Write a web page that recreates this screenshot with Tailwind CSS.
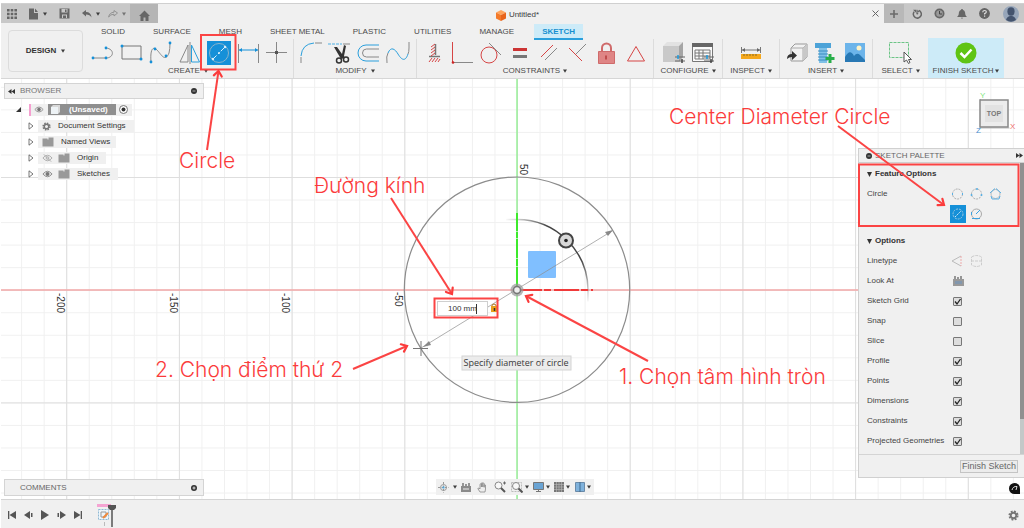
<!DOCTYPE html>
<html lang="vi">
<head>
  <meta charset="UTF-8">
  <meta name="viewport" content="width=device-width, initial-scale=1.0">
  <title>Untitled*</title>
  <script src="https://cdn.jsdelivr.net/npm/@tailwindcss/browser@4"></script>
</head>
<body class="relative flex flex-col h-screen overflow-hidden bg-white pl-px pt-[3px] text-[8px] leading-[10px] text-[#4a4a4a] font-['Liberation_Sans',sans-serif]">

  <!-- shared icons -->
  <svg class="hidden">
    <symbol id="caret" viewBox="0 0 4 4"><path d="M0 .5h4L2 3.8z" fill="#3c3c3c"/></symbol>
    <symbol id="closed" viewBox="0 0 6 8"><path d="M1 .8v6.4L5 4z" fill="#fff" stroke="#555" stroke-width=".8"/></symbol>
    <symbol id="folder" viewBox="0 0 12 10"><path d="M.5 1.500h5v1h1v-2h5v9h-11z" fill="#999"/></symbol>
    <symbol id="eye" viewBox="0 0 12 8"><path d="M1 4q5-6 10 0q-5 6-10 0z" fill="#e4e4e4" stroke="#8a8a8a"/><circle cx="6" cy="4" r="2.100" fill="#777"/></symbol>
    <symbol id="gear" viewBox="0 0 12 12"><circle cx="6" cy="6" r="4.500" fill="none" stroke="#777" stroke-width="2" stroke-dasharray="2 1.534"/><circle cx="6" cy="6" r="3" fill="none" stroke="#777" stroke-width="2"/></symbol>
    <symbol id="sliders" viewBox="0 0 10 8"><path d="M0 2h10M0 6h10" stroke="#666" stroke-width="1"/><path d="M3 0v4" stroke="#1a9be0" stroke-width="1.500"/><path d="M7 4v4" stroke="#444" stroke-width="1.500"/></symbol>
  </svg>

  <header class="shrink-0 bg-[#f0f0f0] border-b border-[#d6d6d6]">
    <!-- document tabs -->
    <div class="flex h-5 border-t border-[#d0d0d0]">
      <div class="flex items-center w-[129px] bg-[#c8c8c8] pl-[6px]">
        <button aria-label="Data panel"><svg class="size-[10px]" viewBox="0 0 10 10" fill="#666"><path d="M0 0h2.600v2.600H0zM3.700 0h2.600v2.600H3.700zM7.400 0H10v2.600H7.400zM0 3.700h2.600v2.600H0zM3.700 3.700h2.600v2.600H3.700zM7.400 3.700H10v2.600H7.400zM0 7.400h2.600V10H0zM3.700 7.400h2.600V10H3.700zM7.400 7.400H10V10H7.400z"/></svg></button>
        <button aria-label="File" class="flex items-center gap-1 ml-[11px]"><svg class="w-[11px] h-3" viewBox="0 0 11 12"><path d="M1 .5h5V5h4v6.500H1z" fill="#666"/><path d="M7 .5 10 4H7z" fill="#666"/></svg><svg class="size-1"><use href="#caret"/></svg></button>
        <button aria-label="Save" class="ml-3"><svg class="size-[11px]" viewBox="0 0 11 11"><path d="M.5.5h10v10H.5z" fill="#666"/><path d="M2.500 1h6v3.500h-6zM3 6.500h5V10H3z" fill="#c8c8c8"/><path d="M6 1.500h1.500V4H6zM4 7.500h3V10H4z" fill="#666"/></svg></button>
        <button aria-label="Undo" class="flex items-center gap-1 ml-3"><svg class="w-[10px] h-2" viewBox="0 0 10 8"><path d="M0 3 4 0v2q5 0 5.500 5.500Q8 4.500 4 4.500v2z" fill="#666"/></svg><svg class="size-1"><use href="#caret"/></svg></button>
        <button aria-label="Redo" class="flex items-center gap-1 ml-2 opacity-60"><svg class="w-[10px] h-2" viewBox="0 0 10 8"><path d="M9.500 3 6 .5v1.700Q1.500 2.500.6 7 2.500 4.200 6 4.200V6z" fill="none" stroke="#666" stroke-width=".9"/></svg><svg class="size-1"><use href="#caret"/></svg></button>
      </div>
      <button aria-label="Home" class="flex items-center justify-center w-7 pt-1 bg-[#b5b5b5]"><svg class="size-[11px]" viewBox="0 0 11 11"><path d="M5.500.5 11 6H9.500v5h-3V7.500h-2V11h-3V6H0z" fill="#666"/></svg></button>
      <div class="relative flex flex-1 items-center justify-center gap-[3px] pt-[3px] pr-1 text-[#3c3c3c]">
        <svg class="w-[10px] h-[11px]" viewBox="0 0 10 11"><path d="M0 2.500 5 0l5 2.500L5 5z" fill="#ffa45c"/><path d="M0 2.500 5 5v6L0 8.500z" fill="#f47a2a"/><path d="M10 2.500 5 5v6l5-2.500z" fill="#e8631a"/></svg>
        <span>Untitled*</span>
        <button aria-label="Close" class="absolute right-[2px] top-[6px]"><svg class="size-[7px]" viewBox="0 0 7 7"><path d="M.5.500l6 6M6.500.5l-6 6" stroke="#666"/></svg></button>
      </div>
      <button aria-label="New tab" class="flex items-center justify-center w-5 bg-[#b8b8b8] ml-[3px]"><svg class="size-2" viewBox="0 0 8 8"><path d="M4 0v8M0 4h8" stroke="#6a6a6a" stroke-width="1.600"/></svg></button>
      <div class="flex items-center gap-3 bg-[#c8c8c8] pl-2 pr-[5px]">
        <button aria-label="Extensions"><svg class="size-[10px]" viewBox="0 0 10 10"><path d="M2.200 2.600a4 4 0 1 0 4.600-1.200" fill="none" stroke="#666" stroke-width="1.500"/><path d="M1 .8h3.600v3.400zM5.500.5l2 2.500-2.500.4z" fill="#666"/><circle cx="5.300" cy="4.500" r="1" fill="#666"/></svg></button>
        <button aria-label="Job status"><svg class="size-[11px]" viewBox="0 0 11 11"><circle cx="5.500" cy="5.500" r="5" fill="#666"/><circle cx="5.500" cy="5.500" r="3.300" fill="#999"/><path d="M5.500 3v3H8" fill="none" stroke="#444"/></svg></button>
        <button aria-label="Notifications"><svg class="size-[10px]" viewBox="0 0 10 10"><path d="M5 0c.8 0 1 .7 1 1 1.700.5 2.200 2 2.200 3.500S9 7 10 8H0c1-1 1.800-2 1.800-3.500S2.300 1.500 4 1c0-.3.200-1 1-1zM3.800 8.700h2.400Q5 10.500 3.800 8.700z" fill="#666"/></svg></button>
        <button aria-label="Help"><svg class="size-[11px]" viewBox="0 0 11 11"><circle cx="5.500" cy="5.500" r="5.400" fill="#636363"/><path d="M3.700 4.200q.2-1.700 1.900-1.700t1.700 1.500Q7.200 5 5.600 5.600v1M5.600 7.500v1.300" fill="none" stroke="#ddd" stroke-width="1.200"/></svg></button>
        <button aria-label="Account" class="ml-px"><svg class="size-4" viewBox="0 0 16 16"><circle cx="8" cy="8" r="8" fill="#97a6ba"/><ellipse cx="8" cy="5.500" rx="3.600" ry="4.200" fill="#44546e"/><path d="M3 14q1-3.500 4-4h2q3 .5 4 4-5 3.500-10 0z" fill="#44546e"/></svg></button>
      </div>
    </div>

    <div class="flex pl-[7px] pr-5">
      <button class="flex items-center justify-center gap-[5px] w-[75px] h-[42px] mt-[7px] rounded-sm border border-[#dcdcdc] font-bold text-[#333]">DESIGN <svg class="size-1"><use href="#caret"/></svg></button>

      <div class="flex-1 ml-2">
        <nav class="flex items-center h-4 pl-[10px] pt-px gap-7">
          <a href="#">SOLID</a>
          <a href="#">SURFACE</a>
          <a href="#">MESH</a>
          <a href="#">SHEET METAL</a>
          <a href="#">PLASTIC</a>
          <a href="#">UTILITIES</a>
          <a href="#">MANAGE</a>
          <a href="#" class="-mx-2 px-2 pt-[3px] pb-px bg-[#cdebf8] border-b-2 border-[#2a9fdc] text-[#1590d0] font-bold">SKETCH</a>
        </nav>

        <div class="grid grid-cols-[202fr_123fr_237fr_69fr_57fr_93fr_56fr_76fr] h-[39px] text-center">
          <!-- create -->
          <section class="flex flex-col justify-between pb-[2px]">
            <div class="flex gap-[5px] pt-[2px]">
              <button aria-label="Line"><svg class="size-6" viewBox="0 0 24 24" fill="none"><path d="M1 17h14M15 7c9 1 8 10 0 10" stroke="#888"/><g fill="#1590d8"><circle cx="2" cy="17" r="1.400"/><circle cx="15" cy="17" r="1.400"/><circle cx="15" cy="7" r="1.400"/></g></svg></button>
              <button aria-label="Rectangle"><svg class="size-6" viewBox="0 0 24 24" fill="none"><path d="M2 5h19v13H2z" stroke="#777"/><circle cx="2" cy="5" r="1.500" fill="#1590d8"/><circle cx="21" cy="18" r="1.500" fill="#1590d8"/></svg></button>
              <button aria-label="Spline"><svg class="size-6" viewBox="0 0 24 24" fill="none"><path d="M2 21C1 8 4 5 8 9s8 13 12 3q1-4 1-10" stroke="#888"/><g fill="#1590d8"><circle cx="2" cy="21" r="1.400"/><circle cx="6" cy="8" r="1.400"/><circle cx="17" cy="15" r="1.400"/><circle cx="21" cy="2" r="1.400"/></g></svg></button>
              <button aria-label="Mirror"><svg class="size-6" viewBox="0 0 24 24" fill="none"><path d="M10 4v17H2zM12 1v22" stroke="#888"/><path d="M13.500 4v17h8z" stroke="#2a9fdc"/></svg></button>
              <button aria-label="Circle" class="bg-[#1590d8]"><svg class="size-6" viewBox="0 0 24 24" fill="none"><circle cx="12" cy="12" r="9.500" stroke="#8ab4cc"/><path d="M6 18 18 6" stroke="#d8f0ff" stroke-dasharray="5 2 2 2"/><g fill="#d8f0ff"><circle cx="6" cy="18" r="1.200"/><circle cx="12" cy="12" r="1"/><circle cx="18" cy="6" r="1.200"/></g></svg></button>
              <button aria-label="Sketch dimension"><svg class="size-6" viewBox="0 0 24 24" fill="none"><path d="M2.500 3v19M22.500 3v19" stroke="#888"/><path d="M3 9h19" stroke="#1590d8"/><path d="M3 9l3-2v4zM22 9l-3-2v4z" fill="#1590d8"/></svg></button>
              <button aria-label="Point"><svg class="size-6" viewBox="0 0 24 24" fill="none"><path d="M11.500 1v21M1 11.500h21" stroke="#888"/><path d="M10 10h3v3h-3z" fill="#555"/></svg></button>
            </div>
            <button class="flex items-center justify-center gap-1 pr-2">CREATE <svg class="size-1"><use href="#caret"/></svg></button>
          </section>

          <!-- modify -->
          <section class="flex flex-col justify-between pb-[2px] border-l border-[#dcdcdc]">
            <div class="flex gap-[5px] pt-[2px] pl-[5px]">
              <button aria-label="Fillet"><svg class="size-6" viewBox="0 0 24 24" fill="none"><path d="M2 22v-6M16 2h7" stroke="#888"/><path d="M2 15Q3 3 15 2" stroke="#2a9fdc"/></svg></button>
              <button aria-label="Trim"><svg class="size-6" viewBox="0 0 24 24" fill="none"><path d="M0 3h14" stroke="#4db0e6" stroke-dasharray="3 1"/><path d="M15 3h7" stroke="#888"/><path d="m6 6 3 0 5 7 2-9 2 1-2 10 1 2-4 1z" fill="#333"/><circle cx="11" cy="19.500" r="2.500" stroke="#333" stroke-width="1.500"/><circle cx="18" cy="18.500" r="2.500" stroke="#333" stroke-width="1.500"/></svg></button>
              <button aria-label="Offset"><svg class="size-6" viewBox="0 0 24 24" fill="none"><path d="M22 4H9a8 8 0 0 0 0 16h13" stroke="#2a9fdc"/><path d="M22 8H9.500a4 4 0 0 0 0 8H22" stroke="#888"/></svg></button>
              <button aria-label="Blend curve"><svg class="size-6" viewBox="0 0 24 24" fill="none"><path d="M1 22Q0 15 2 12M23 1v6q0 4-1 6" stroke="#888"/><path d="M2 12c3-7 7-4 10 1s7 9 10 0" stroke="#2a9fdc"/></svg></button>
            </div>
            <button class="flex items-center justify-center gap-1">MODIFY <svg class="size-1"><use href="#caret"/></svg></button>
          </section>

          <!-- constraints -->
          <section class="flex flex-col justify-between pb-[2px] border-l border-[#dcdcdc]">
            <div class="flex gap-[5px] pt-[2px] pl-[5px]">
              <button aria-label="Horizontal/Vertical"><svg class="size-6" viewBox="0 0 24 24" fill="none"><path d="M13.500 3v11M7 15.500h11" stroke="#777" stroke-width="1.500"/><path d="m9 6 4-3m-4 6 4-3m-4 6 4-3m-4 6 4-3M7 21l3-4m0 4 3-4m0 4 3-4m0 4 2-3" stroke="#d64545"/></svg></button>
              <button aria-label="Perpendicular"><svg class="size-6" viewBox="0 0 24 24" fill="none"><path d="M1.500 1v20" stroke="#d64545"/><path d="M2 21.500h20" stroke="#888"/><circle cx="2" cy="21.500" r="1.300" fill="#c22"/></svg></button>
              <button aria-label="Tangent"><svg class="size-6" viewBox="0 0 24 24" fill="none"><circle cx="9" cy="14" r="8" stroke="#d64545"/><path d="m9 2 12 12" stroke="#888"/></svg></button>
              <button aria-label="Equal"><svg class="size-6" viewBox="0 0 24 24" fill="none"><path d="M4 8.500h14" stroke="#cc3434" stroke-width="3"/><path d="M4 15.500h14" stroke="#777" stroke-width="3"/></svg></button>
              <button aria-label="Parallel"><svg class="size-6" viewBox="0 0 24 24" fill="none"><path d="M3 16 15 4" stroke="#d64545"/><path d="M7 19 19 7" stroke="#888"/></svg></button>
              <button aria-label="Collinear"><svg class="size-6" viewBox="0 0 24 24" fill="none"><path d="m2 7 13 13" stroke="#d64545"/><path d="M9 13 19 3" stroke="#888"/></svg></button>
              <button aria-label="Fix"><svg class="size-6" viewBox="0 0 24 24" fill="none"><path d="M6 11V7a4.500 4.500 0 0 1 9 0v4" stroke="#cf6a6a" stroke-width="2"/><path d="M2.500 10.500h16v12h-16z" fill="#df8585" stroke="#cf6a6a"/><path d="M10 14.500v4" stroke="#b43a3a" stroke-width="1.500"/></svg></button>
              <button aria-label="Polygon"><svg class="size-6" viewBox="0 0 24 24" fill="none"><path d="M11 5.500 19.500 20h-17z" stroke="#d64545"/></svg></button>
            </div>
            <button class="flex items-center justify-center gap-[3px]">CONSTRAINTS <svg class="size-1"><use href="#caret"/></svg></button>
          </section>

          <!-- configure -->
          <section class="flex flex-col justify-between pb-[2px] border-l border-[#dcdcdc]">
            <div class="flex justify-center gap-[5px] pt-[2px]">
              <button aria-label="Configure design"><svg class="size-6" viewBox="0 0 24 24"><path d="m1 5 4-4h16l-4 4z" fill="#e2e2e2"/><path d="M1 5h16v16H1z" fill="#c9c9c9"/><path d="m17 5 4-4v15l-4 5z" fill="#a5a5a5"/><use href="#sliders" x="13" y="14" width="10" height="8"/></svg></button>
              <button aria-label="Configuration table"><svg class="size-6" viewBox="0 0 24 24" fill="none"><path d="M1.500 2.500h20v18h-20z" fill="#fafafa" stroke="#777"/><path d="M1 2h21v4H1z" fill="#666"/><path d="M4 9h15v9H4zM4 12h15M4 15h15M8 9v9M12 9v9" stroke="#777"/><use href="#sliders" x="13" y="14" width="10" height="8"/></svg></button>
            </div>
            <button class="flex items-center justify-center gap-[3px]">CONFIGURE <svg class="size-1"><use href="#caret"/></svg></button>
          </section>

          <!-- inspect -->
          <section class="flex flex-col justify-between pb-[2px] border-l border-[#dcdcdc]">
            <div class="flex justify-center pt-[2px]">
              <button aria-label="Measure"><svg class="size-6" viewBox="0 0 24 24" fill="none"><path d="M2.500 6v6M21.500 6v6M3 9h18" stroke="#777"/><path d="m3 9 3-2v4zM21 9l-3-2v4z" fill="#666"/><path d="M2 13h20v5H2z" fill="#f5a81c"/><path d="M5 13v2m3-2v2m3-2v2m3-2v2m3-2v2" stroke="#8a6a20"/></svg></button>
            </div>
            <button class="flex items-center justify-center gap-[3px]">INSPECT <svg class="size-1"><use href="#caret"/></svg></button>
          </section>

          <!-- insert -->
          <section class="flex flex-col justify-between pb-[2px] border-l border-[#dcdcdc]">
            <div class="flex justify-center gap-[5px] pt-[2px]">
              <button aria-label="Insert derive"><svg class="size-6" viewBox="0 0 24 24"><path d="m6 7 4-4h12v13l-4 4H6z" fill="#f2f2f2" stroke="#999"/><path d="M18 7h-12M18 7v13M18 7l4-4" stroke="#aaa"/><path d="m18 7 4-4v13l-4 4z" fill="#c8c8c8"/><path d="M2 18q0-5 5-5v-3l5 4.500L7 19v-3q-3 0-5 2z" fill="#333"/></svg></button>
              <button aria-label="Insert fastener"><svg class="size-6" viewBox="0 0 24 24"><path d="M1 2h16v5H1z" fill="#4da3d8"/><path d="M5 7h8v15H5z" fill="#7fc1e8"/><path d="M4 10h10M4 13h10M4 16h10M4 19h10" stroke="#3b8cc0"/><path d="M16 13v9M11.500 17.500h9" stroke="#27ae4a" stroke-width="3"/></svg></button>
              <button aria-label="Insert image"><svg class="size-6" viewBox="0 0 24 24"><path d="M2 2h20v19H2z" fill="#6cb4ea"/><circle cx="16" cy="7" r="2.500" fill="#fdf3c8"/><path d="M2 16q5-9 9-1 3-4 6-1l5 5v2H2z" fill="#2878b4"/></svg></button>
            </div>
            <button class="flex items-center justify-center gap-[3px]">INSERT <svg class="size-1"><use href="#caret"/></svg></button>
          </section>

          <!-- select -->
          <section class="flex flex-col justify-between pb-[2px] border-l border-[#dcdcdc]">
            <div class="flex justify-center pt-[2px]">
              <button aria-label="Select"><svg class="size-6" viewBox="0 0 24 24" fill="none"><path d="M.5 1.500h19v15H.5z" stroke="#6cc486" stroke-dasharray="3 1"/><path d="M15 11v10l2.500-2 2 3.500 1.500-1-1.500-3h3z" fill="#fff" stroke="#555"/></svg></button>
            </div>
            <button class="flex items-center justify-center gap-[3px]">SELECT <svg class="size-1"><use href="#caret"/></svg></button>
          </section>

          <!-- finish -->
          <button class="flex flex-col items-center justify-between -mt-px pb-[2px] bg-[#cdebf8]">
            <svg class="size-6 mt-[3px]" viewBox="0 0 24 24"><circle cx="12" cy="12" r="10.500" fill="#5fc414"/><path d="m6.500 12 4 4 7-7.500" fill="none" stroke="#fff" stroke-width="2.500"/></svg>
            <span class="flex items-center gap-[2px]">FINISH SKETCH <svg class="size-1"><use href="#caret"/></svg></span>
          </button>
        </div>
      </div>
    </div>
  </header>

  <main class="relative flex-1 min-h-0 overflow-hidden bg-white">
    <!-- sketch plane: 10 mm = 22.54 units, origin at 517,290 -->
    <svg class="absolute inset-0 size-full" viewBox="1 79 1023 420" preserveAspectRatio="xMidYMid slice" fill="none">
      <defs>
        <pattern id="minor" x="517" y="289.700" width="22.540" height="22.540" patternUnits="userSpaceOnUse"><path d="M0 .5h22.540M.5 0v22.540" stroke="#f0f0f0"/></pattern>
        <pattern id="major" x="517" y="289.700" width="112.700" height="112.700" patternUnits="userSpaceOnUse"><path d="M0 .5h112.700M.5 0v112.700" stroke="#dedede"/></pattern>
        <linearGradient id="fade" gradientUnits="userSpaceOnUse" x1="505" y1="219" x2="590" y2="302"><stop offset="0" stop-color="#444" stop-opacity="0"/><stop offset=".3" stop-color="#444"/><stop offset=".7" stop-color="#444"/><stop offset="1" stop-color="#444" stop-opacity="0"/></linearGradient>
      </defs>
      <rect x="0" y="0" width="1024" height="528" fill="url(#minor)"/>
      <rect x="0" y="0" width="1024" height="528" fill="url(#major)"/>
      <path d="M0 290h1024" stroke="#f4aaaa" stroke-width="1.500"/>
      <path d="M517 0v528" stroke="#98ef98" stroke-width="1.500"/>
      <g class="text-[10px]" fill="#333">
        <text transform="translate(57 293) rotate(90)">-200</text>
        <text transform="translate(170 293) rotate(90)">-150</text>
        <text transform="translate(282 293) rotate(90)">-100</text>
        <text transform="translate(395 292) rotate(90)">-50</text>
        <text transform="translate(520 164) rotate(90)">50</text>
      </g>

      <circle cx="517" cy="289.700" r="112.700" stroke="#8c8c8c" stroke-width="1.200"/>
      <rect x="528" y="251" width="28" height="27" rx="1" fill="#80bfff"/>
      <path d="M421 348 612 231" stroke="#8f8f8f" stroke-opacity=".7"/>
      <path d="m423 347 6-6 2 4zM613 230l-8 2 3 4z" fill="#888"/>
      <path d="M506 219.500h11a71 71 0 0 1 71 70v12" stroke="url(#fade)" stroke-width="1.500"/>
      <circle cx="566" cy="240.500" r="7" fill="#d8d8d8" stroke="#444" stroke-width="2"/>
      <circle cx="566" cy="240.500" r="1.800" fill="#222"/>
      <path d="M517 213v77" stroke="#3dea2c" stroke-width="2" stroke-dasharray="18 1 6 1 19 1 7 1 40"/>
      <path d="M517 290h76" stroke="#f03a3a" stroke-width="2" stroke-dasharray="25 2 7 3"/>
      <circle cx="517" cy="290" r="6.500" fill="#999" fill-opacity=".7"/>
      <circle cx="517" cy="290" r="3.500" fill="#eee" stroke="#777" stroke-width="1.500"/>
      <path d="M421 341v15M413 348.500h15" stroke="#777"/>

      <!-- dimension box and prompt -->
      <foreignObject x="437" y="301" width="51" height="16">
        <input type="text" value="100 mm" aria-label="Diameter" class="block w-full h-[15px] pl-[10px] pr-1 bg-white border border-[#cfcfcf] text-[8px] leading-[10px] text-[#333] outline-none">
      </foreignObject>
      <path d="M476.500 304v10" stroke="#333"/>
      <path d="M492 307v-2q2-2 4 0v2" stroke="#b07a1e"/>
      <path d="M491 306h7v6h-7z" fill="#e8a01c"/>
      <path d="M494.500 308v3" stroke="#333" stroke-width="1.500"/>
      <rect x="462" y="356" width="109" height="14" fill="#ececec" stroke="#d4d4d4"/>
      <text x="516" y="366" text-anchor="middle" fill="#3a3a3a" class="text-[9px] font-['Open_Sans',sans-serif]">Specify diameter of circle</text>
    </svg>

    <!-- browser tree -->
    <aside class="absolute left-[3px] top-1 w-[200px]">
      <div class="flex items-center h-4 px-[3px] bg-[#f0f0f0] border border-[#d4d4d4] text-[#777]">
        <svg class="w-[7px] h-[5px]" viewBox="0 0 7 5"><path d="M3.500 0v5L0 2.500zM7 0v5L3.500 2.500z" fill="#333"/></svg>
        <span class="ml-[5px] flex-1">BROWSER</span>
        <svg class="size-[6px] mr-[3px]" viewBox="0 0 6 6"><circle cx="3" cy="3" r="3" fill="#333"/><path d="M1.500 3h3" stroke="#aaa"/></svg>
      </div>
      <ul class="mt-[2px] text-[#333]">
        <li class="flex items-center h-[17px] pl-3">
          <svg class="size-[5px]" viewBox="0 0 5 5"><path d="M5 0v5H0z" fill="#333"/></svg>
          <div class="flex items-center h-3 ml-2 bg-[#f0f0f0] border-l-2 border-[#f5a0d0] pl-[3px] pr-1">
            <svg class="w-[10px] h-[7px]"><use href="#eye"/></svg>
            <div class="flex items-center h-[11px] ml-1 pl-[3px] pr-2 bg-[#8f8f8f] text-white font-bold">
              <svg class="size-[9px] mr-[9px]" viewBox="0 0 9 9"><path d="m0 2 2-2h7v7L7 9H0z" fill="#d8d8d8"/><path d="M0 2h7v7H0z" fill="#eef3f6"/></svg>
              (Unsaved)
            </div>
            <svg class="size-[9px] ml-[3px]" viewBox="0 0 9 9"><circle cx="4.500" cy="4.500" r="4" fill="#fff" stroke="#777"/><circle cx="4.500" cy="4.500" r="2" fill="#333"/></svg>
          </div>
        </li>
        <li class="flex items-center h-4 pl-6"><svg class="w-[6px] h-2"><use href="#closed"/></svg><div class="flex items-center h-3 ml-1 pl-1 pr-2 bg-[#f0f0f0]"><svg class="size-[9px] mr-[7px]"><use href="#gear"/></svg>Document Settings</div></li>
        <li class="flex items-center h-4 pl-6"><svg class="w-[6px] h-2"><use href="#closed"/></svg><div class="flex items-center h-3 ml-1 pl-1 pr-[6px] bg-[#f0f0f0]"><svg class="w-3 h-[10px] mr-[7px]"><use href="#folder"/></svg>Named Views</div></li>
        <li class="flex items-center h-4 pl-6"><svg class="w-[6px] h-2"><use href="#closed"/></svg><div class="flex items-center h-3 ml-1 pl-1 pr-2 bg-[#f0f0f0]"><svg class="w-[11px] h-2 mr-[5px]" viewBox="0 0 12 8"><path d="M1 4q5-6 10 0q-5 6-10 0zM2 0l8 8" fill="none" stroke="#aaa"/><circle cx="6" cy="4" r="1.500" fill="none" stroke="#aaa"/></svg><svg class="w-3 h-[10px] mr-[7px]"><use href="#folder"/></svg>Origin</div></li>
        <li class="flex items-center h-4 pl-6"><svg class="w-[6px] h-2"><use href="#closed"/></svg><div class="flex items-center h-3 ml-1 pl-1 pr-2 bg-[#f0f0f0]"><svg class="w-[11px] h-2 mr-[5px]"><use href="#eye"/></svg><svg class="w-3 h-[10px] mr-[7px]"><use href="#folder"/></svg>Sketches</div></li>
      </ul>
    </aside>

    <!-- view cube -->
    <svg class="absolute right-1 top-3 w-11 h-[46px] text-[8px]" viewBox="0 0 44 46">
      <path d="M4.500 8v29h29" fill="none" stroke="#bbb"/>
      <rect x="4" y="9" width="28" height="27" fill="#ececec" stroke="#888" stroke-width="1.500"/>
      <rect x="9" y="14" width="18" height="17" fill="#e2e2e2"/>
      <text x="18" y="25" text-anchor="middle" fill="#777" class="text-[7px] font-bold">TOP</text>
      <text x="4" y="7" fill="#7fe87f">Y</text>
      <text x="0" y="42" fill="#4a90d0">Z</text>
      <text x="34" y="38" fill="#f07070">X</text>
    </svg>

    <!-- sketch palette -->
    <aside class="absolute right-0 top-[69px] w-[166px] bg-[#f0f0f0] border border-r-0 border-[#d0d0d0] text-[#444]">
      <div class="flex items-center h-[14px] pl-[7px] pr-px border-b border-[#d0d0d0] text-[#666]">
        <svg class="size-[6px]" viewBox="0 0 6 6"><circle cx="3" cy="3" r="3" fill="#333"/><path d="M1.500 3h3" stroke="#aaa"/></svg>
        <span class="ml-[3px] flex-1">SKETCH PALETTE</span>
        <svg class="w-[7px] h-[5px]" viewBox="0 0 7 5"><path d="M0 0v5l3.500-2.500zM3.500 0v5L7 2.500z" fill="#333"/></svg>
      </div>
      <div class="flex">
        <div class="flex-1 pl-2 pt-px pb-[3px]">
          <h2 class="flex items-center gap-[3px] h-5 font-bold text-[#333]"><svg class="size-[5px]" viewBox="0 0 5 5"><path d="M0 0h5L2.500 5z" fill="#333"/></svg>Feature Options</h2>
          <div class="grid grid-cols-[83px_1fr]">
            <span class="h-5 leading-[20px]">Circle</span>
            <div class="grid grid-cols-[16px_16px_16px] gap-x-[3px] auto-rows-[20px] items-center">
              <button aria-label="Circle type 2-point"><svg class="size-4" viewBox="0 0 16 16" fill="none"><circle cx="7.500" cy="8" r="5" stroke="#aaa" stroke-dasharray="2 1"/><path d="M2.500 7v2M12.500 7v2" stroke="#5ab0e4"/></svg></button>
              <button aria-label="Circle type 3-point"><svg class="size-4" viewBox="0 0 16 16" fill="none"><circle cx="7.500" cy="8" r="5" stroke="#aaa" stroke-dasharray="2 1"/><path d="M7 3h2M2.500 8v2M12.500 8v2" stroke="#5ab0e4" stroke-width="1.500"/></svg></button>
              <button aria-label="Circle type 3-tangent"><svg class="size-4" viewBox="0 0 16 16" fill="none"><circle cx="7.500" cy="8" r="4.500" stroke="#bbb"/><path d="m2 7 5-4.500M8 2.500l5 4.500M4 13h7M3 10l1 3M12 10l-1 3" stroke="#5ab0e4"/></svg></button>
              <button aria-label="Circle type center diameter" class="h-[18px] bg-[#1590d8]"><svg class="size-4" viewBox="0 0 16 16" fill="none"><circle cx="8" cy="8" r="5" stroke="#9cc8e0" stroke-dasharray="2 1"/><path d="m5 11 6-6" stroke="#cde8f8" stroke-dasharray="2 1"/></svg></button>
              <button aria-label="Circle type 2-tangent"><svg class="size-4" viewBox="0 0 16 16" fill="none"><circle cx="7.500" cy="8" r="5" stroke="#aaa"/><path d="m7 8 4-4M3 12.500h8M2.500 6v3" stroke="#3ba2e0"/></svg></button>
            </div>
          </div>

          <h2 class="flex items-center gap-[3px] h-5 mt-[7px] font-bold text-[#333]"><svg class="size-[5px]" viewBox="0 0 5 5"><path d="M0 0h5L2.500 5z" fill="#333"/></svg>Options</h2>
          <div class="flex items-center h-5"><span class="w-[83px]">Linetype</span>
            <button aria-label="Construction"><svg class="size-4" viewBox="0 0 16 16" fill="none"><path d="M11 3 2 8l9 5" stroke="#bbb"/><path d="M11 3v10" stroke="#eaa" stroke-dasharray="2 1"/></svg></button>
            <button aria-label="Centerline" class="ml-[3px]"><svg class="size-4" viewBox="0 0 16 16" fill="none"><path d="M2.500 4q5-3 10 0v8q-5 3-10 0zM2 8h11" stroke="#ccc" stroke-dasharray="3 1"/></svg></button>
          </div>
          <div class="flex items-center h-5"><span class="w-[86px]">Look At</span><button aria-label="Look At"><svg class="w-[11px] h-[10px]" viewBox="0 0 11 10"><path d="M0 3h11v7H0z" fill="#999"/><path d="M2 0v3m3-2v2m3-3v3" stroke="#777" stroke-width="1.500"/><path d="M2 5h7v3H2z" fill="#8297ad"/></svg></button></div>
          <label class="flex items-center h-5"><span class="w-[86px]">Sketch Grid</span><input type="checkbox" checked class="peer appearance-none size-[9px] rounded-[1px] border border-[#777] bg-[#ddd]"><svg class="hidden peer-checked:block size-[9px] -ml-[9px]" viewBox="0 0 9 9"><path d="m2 4.500 2 2.500 3.500-5" fill="none" stroke="#222" stroke-width="1.300"/></svg></label>
          <label class="flex items-center h-5"><span class="w-[86px]">Snap</span><input type="checkbox" class="appearance-none size-[9px] rounded-[1px] border border-[#777] bg-[#ddd]"></label>
          <label class="flex items-center h-5"><span class="w-[86px]">Slice</span><input type="checkbox" class="appearance-none size-[9px] rounded-[1px] border border-[#777] bg-[#ddd]"></label>
          <label class="flex items-center h-5"><span class="w-[86px]">Profile</span><input type="checkbox" checked class="peer appearance-none size-[9px] rounded-[1px] border border-[#777] bg-[#ddd]"><svg class="hidden peer-checked:block size-[9px] -ml-[9px]" viewBox="0 0 9 9"><path d="m2 4.500 2 2.500 3.500-5" fill="none" stroke="#222" stroke-width="1.300"/></svg></label>
          <label class="flex items-center h-5"><span class="w-[86px]">Points</span><input type="checkbox" checked class="peer appearance-none size-[9px] rounded-[1px] border border-[#777] bg-[#ddd]"><svg class="hidden peer-checked:block size-[9px] -ml-[9px]" viewBox="0 0 9 9"><path d="m2 4.500 2 2.500 3.500-5" fill="none" stroke="#222" stroke-width="1.300"/></svg></label>
          <label class="flex items-center h-5"><span class="w-[86px]">Dimensions</span><input type="checkbox" checked class="peer appearance-none size-[9px] rounded-[1px] border border-[#777] bg-[#ddd]"><svg class="hidden peer-checked:block size-[9px] -ml-[9px]" viewBox="0 0 9 9"><path d="m2 4.500 2 2.500 3.500-5" fill="none" stroke="#222" stroke-width="1.300"/></svg></label>
          <label class="flex items-center h-5"><span class="w-[86px]">Constraints</span><input type="checkbox" checked class="peer appearance-none size-[9px] rounded-[1px] border border-[#777] bg-[#ddd]"><svg class="hidden peer-checked:block size-[9px] -ml-[9px]" viewBox="0 0 9 9"><path d="m2 4.500 2 2.500 3.500-5" fill="none" stroke="#222" stroke-width="1.300"/></svg></label>
          <label class="flex items-center h-5"><span class="w-[86px]">Projected Geometries</span><input type="checkbox" checked class="peer appearance-none size-[9px] rounded-[1px] border border-[#777] bg-[#ddd]"><svg class="hidden peer-checked:block size-[9px] -ml-[9px]" viewBox="0 0 9 9"><path d="m2 4.500 2 2.500 3.500-5" fill="none" stroke="#222" stroke-width="1.300"/></svg></label>
        </div>
        <div class="w-1 bg-[#c4c8c8]"><div class="h-[88%] bg-[#909090]"></div></div>
      </div>
      <div class="flex justify-end items-center h-[23px] pr-[6px] border-t border-[#d4d4d4]">
        <button class="h-[13px] px-px border border-[#c4c4c4] bg-[#ececec] text-[9px] leading-[11px] text-[#666]">Finish Sketch</button>
      </div>
    </aside>

    <!-- comments -->
    <div class="absolute left-[3px] bottom-[3px] flex items-center w-[200px] h-[17px] pl-[15px] pr-[6px] bg-[#f0f0f0] border border-[#d4d4d4] text-[#666]">
      <span class="flex-1">COMMENTS</span>
      <svg class="size-[6px]" viewBox="0 0 6 6"><circle cx="3" cy="3" r="3" fill="#333"/><path d="M1.500 3h3M3 1.500v3" stroke="#ddd"/></svg>
    </div>

    <!-- navigation bar -->
    <div class="absolute left-1/2 bottom-1 -translate-x-1/2 ml-[2px] flex items-center h-4 w-[158px] pl-[2px] bg-[#f0f0f0]">
      <button aria-label="Orbit" class="flex items-center gap-1"><svg class="size-[11px]" viewBox="0 0 11 11" fill="none"><circle cx="5.500" cy="5.500" r="3" stroke="#999"/><path d="M5.500 0v11M0 5.500h11" stroke="#999" stroke-dasharray="2 1.500"/><path d="M4.500 4.500h2v2h-2z" fill="#4aa6dc"/></svg><svg class="size-1"><use href="#caret"/></svg></button>
      <button aria-label="Look at" class="ml-1"><svg class="w-[10px] h-[10px]" viewBox="0 0 10 10"><path d="M0 4h10v6H0z" fill="#8a8a8a"/><path d="M2 1v3M5 2v2M8 1v3" stroke="#777" stroke-width="1.500"/><path d="M2 6h6v2H2z" fill="#bbb"/></svg></button>
      <button aria-label="Pan" class="ml-[6px]"><svg class="size-[11px]" viewBox="0 0 11 11"><path d="M3 10 .8 6.500 2 6l1 1V2.200q.8-.8 1.400 0V5 1q.8-.8 1.400 0v4-3.600q.8-.7 1.400 0V5.300 3q.8-.6 1.300 0V7L8 10z" fill="#eee" stroke="#888" stroke-width=".8"/></svg></button>
      <button aria-label="Zoom" class="ml-[6px]"><svg class="size-3" viewBox="0 0 12 12" fill="none"><circle cx="4.500" cy="4.500" r="3.500" fill="#f8f8f8" stroke="#888"/><path d="m7 7 4 4" stroke="#555" stroke-width="2"/><path d="M9 2h3M10.500.5v3" stroke="#666"/></svg></button>
      <button aria-label="Fit" class="flex items-center gap-[2px] ml-[5px]"><svg class="size-3" viewBox="0 0 12 12" fill="none"><path d="M.5 1.500h10v9H.5z" stroke="#bbb" stroke-dasharray="2 1"/><circle cx="5" cy="5" r="3.500" fill="#f8f8f8" stroke="#888"/><path d="m7.500 7.500 4 4" stroke="#555" stroke-width="2"/></svg><svg class="size-1"><use href="#caret"/></svg></button>
      <button aria-label="Display" class="flex items-center gap-[2px] ml-1"><svg class="w-[11px] h-[10px]" viewBox="0 0 11 10"><path d="M.5.500h10v7H.5z" fill="#6aa4d4" stroke="#777"/><path d="M3 9.500h5M5.500 8v2" stroke="#777"/></svg><svg class="size-1"><use href="#caret"/></svg></button>
      <button aria-label="Grid" class="flex items-center gap-[2px] ml-1"><svg class="size-[10px]" viewBox="0 0 10 10"><path d="M0 0h10v10H0z" fill="#777"/><path d="M0 2.500h10M0 5h10M0 7.500h10M2.500 0v10M5 0v10M7.500 0v10" stroke="#bbb" stroke-width=".6"/></svg><svg class="size-1"><use href="#caret"/></svg></button>
      <button aria-label="Viewports" class="flex items-center gap-[2px] ml-[5px]"><svg class="size-[10px]" viewBox="0 0 10 10"><path d="M.5.500h9v9h-9z" fill="#7fb2dc" stroke="#6a8aa8"/><path d="M5 0v10" stroke="#3f6a90"/></svg><svg class="size-1"><use href="#caret"/></svg></button>
    </div>

    <button aria-label="Assistant" class="absolute right-1 bottom-[5px]"><svg class="size-[11px]" viewBox="0 0 11 11"><path d="M5.500 0A5.500 5.500 0 0 1 11 5.500V11H5.500a5.500 5.500 0 0 1 0-11z" fill="#111"/><path d="M3 7q1-4 5-3.500L7 7" fill="none" stroke="#ddd"/></svg></button>
  </main>

  <!-- timeline -->
  <footer class="flex shrink-0 items-center h-[29px] pt-[2px] pl-[7px] pr-[5px] bg-[#f0f0f0] border-t border-[#d4d4d4]">
    <div class="flex items-center gap-2">
      <button aria-label="Go to start"><svg class="size-2" viewBox="0 0 8 8" fill="#555"><path d="M0 0h1.300v8H0zM8 0v8L1.500 4z"/></svg></button>
      <button aria-label="Step back"><svg class="w-[9px] h-2" viewBox="0 0 9 8" fill="#555"><path d="M6 0v8L0 4zM7 2h1.500v4H7z"/></svg></button>
      <button aria-label="Play"><svg class="w-2 h-[10px]" viewBox="0 0 8 10" fill="#555"><path d="M0 0v10l8-5z"/></svg></button>
      <button aria-label="Step forward"><svg class="w-[9px] h-2" viewBox="0 0 9 8" fill="#555"><path d="M3 0v8l6-4zM.5 2H2v4H.5z"/></svg></button>
      <button aria-label="Go to end"><svg class="size-2" viewBox="0 0 8 8" fill="#555"><path d="M6.700 0H8v8H6.700zM0 0v8l6.500-4z"/></svg></button>
    </div>
    <button aria-label="Sketch1" class="ml-[15px] mr-auto"><svg class="w-5 h-6" viewBox="0 0 20 24" fill="none"><path d="M0 1h14v3H0z" fill="#f5a3d2"/><path d="M1.500 6.500h10v10h-10z" fill="#eef6fb" stroke="#8fb8d4" stroke-dasharray="2 1"/><path d="M4 9h5v5H4z" stroke="#999"/><path d="m6 15 5-5" stroke="#f08a3c" stroke-width="2"/><path d="M7.500 19v4" stroke="#bbb"/><path d="M11 2h8v3l-2 2h-4l-2-2z" fill="#555"/><path d="M15 6v18" stroke="#555" stroke-width="1.500"/></svg></button>
    <button aria-label="Settings"><svg class="size-[11px]" viewBox="0 0 12 12"><use href="#gear" width="12" height="12"/></svg></button>
  </footer>

  <!-- tutorial notes over the whole window -->
  <svg class="absolute inset-0 size-full pointer-events-none" viewBox="0 0 1024 528" preserveAspectRatio="xMidYMid slice" fill="none">
    <defs>
      <marker id="head" viewBox="-8 -6 10 12" markerWidth="10" markerHeight="12" markerUnits="userSpaceOnUse" orient="auto"><path d="M-5-4 0 0l-5 4" fill="none" stroke="#fb3b3b" stroke-width="2.200" stroke-linecap="round"/></marker>
    </defs>
    <g stroke="#fb4444" stroke-width="2">
      <rect x="201" y="35" width="34.500" height="34.500"/>
      <rect x="434.500" y="298.500" width="63" height="19"/>
      <rect x="859" y="164.500" width="159.500" height="61.500"/>
      <path d="M207 150 218.500 71" marker-end="url(#head)"/>
      <path d="m391 198 61 96" marker-end="url(#head)"/>
      <path d="m353 369 54-23" marker-end="url(#head)"/>
      <path d="M648 361 526 296" marker-end="url(#head)"/>
      <path d="m838 126 106 79" marker-end="url(#head)"/>
    </g>
    <g fill="#fb3b3b" class="text-[21px] font-light font-['Inter',sans-serif]">
      <text x="179" y="168">Circle</text>
      <text x="314" y="193">Đường kính</text>
      <text x="155" y="377">2. Chọn điểm thứ 2</text>
      <text x="619" y="384">1. Chọn tâm hình tròn</text>
      <text x="669" y="124">Center Diameter Circle</text>
    </g>
  </svg>
</body>
</html>
